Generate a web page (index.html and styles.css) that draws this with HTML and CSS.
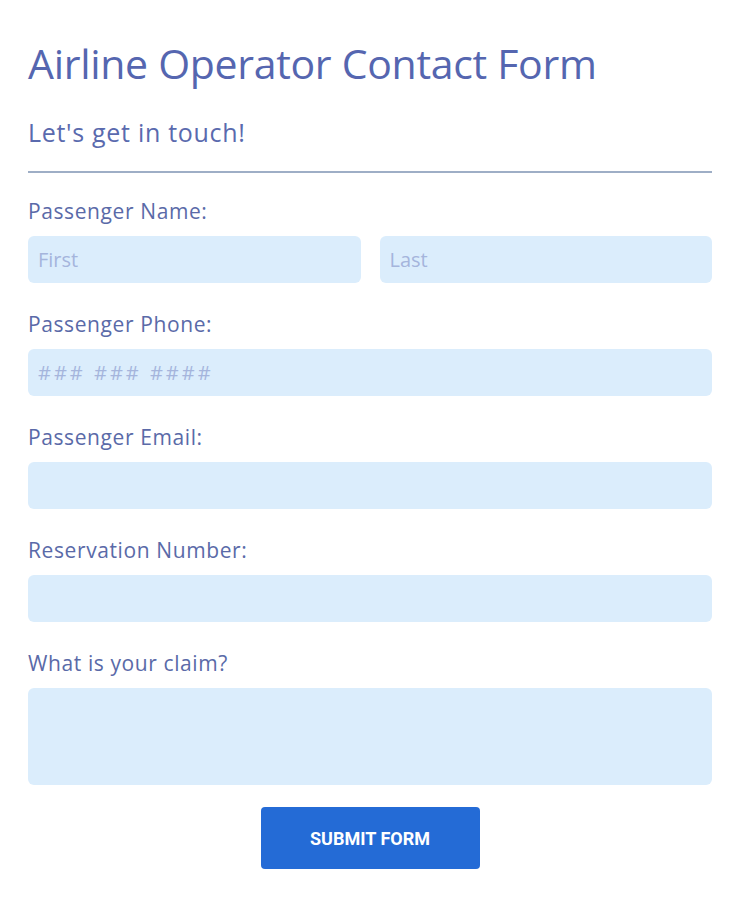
FILE: index.html
```html
<!DOCTYPE html>
<html lang="en">

<head>
  <meta charset="UTF-8">
  <meta name="viewport" content="width=device-width, initial-scale=1.0">
  <title>Airline Operator Contact Form</title>
  <link rel="stylesheet" href="styles.css">
</head>

<body>
  <form class="contact-form">
    <!-- 标题 -->
    <h1 class="form-title">Airline Operator Contact Form</h1>
    <h2 class="form-subtitle">Let's get in touch!</h2>
    <hr class="divider">

    <!-- 乘客姓名 -->
    <div class="field">
      <label class="field-label">Passenger Name:</label>
      <div class="name-row">
        <input type="text" class="field-input" placeholder="First">
        <input type="text" class="field-input" placeholder="Last">
      </div>
    </div>

    <!-- 电话 -->
    <div class="field">
      <label class="field-label">Passenger Phone:</label>
      <input type="tel" class="field-input field-phone" placeholder="### ### ####">
    </div>

    <!-- 邮箱 -->
    <div class="field">
      <label class="field-label">Passenger Email:</label>
      <input type="email" class="field-input">
    </div>

    <!-- 预订号 -->
    <div class="field">
      <label class="field-label">Reservation Number:</label>
      <input type="text" class="field-input">
    </div>

    <!-- 投诉内容 -->
    <div class="field">
      <label class="field-label">What is your claim?</label>
      <textarea class="field-input field-textarea"></textarea>
    </div>

    <div class="actions">
      <button type="submit" class="submit-btn">SUBMIT FORM</button>
    </div>
  </form>
</body>

</html>
```

FILE: styles.css
```css
/* 整体布局 */
body {
  margin: 0;
  background-color: #ffffff;
  font-family: "Open Sans", "Liberation Sans", sans-serif;
  color: #5a6aae;
}

.contact-form {
  display: flex;
  flex-direction: column;
  padding: 38px 28px 0;
}

/* 标题 */
.form-title {
  margin: 0;
  font-size: 41px;
  font-weight: 400;
  letter-spacing: -0.3px;
  line-height: 50px;
  color: #5566b0;
}

.form-subtitle {
  margin: 28px 0 0;
  font-size: 25px;
  font-weight: 400;
  letter-spacing: 0.7px;
  line-height: 32px;
  color: #5a6aae;
}

.divider {
  margin: 23px 0 0;
  border: none;
  height: 2px;
  background-color: #9eaec6;
}

/* 字段 */
.field {
  display: flex;
  flex-direction: column;
  margin-top: 26px;
}

.field+.field {
  margin-top: 29px;
}

.field-label {
  font-size: 21px;
  letter-spacing: 0.6px;
  line-height: 24px;
  color: #5a6aa8;
  margin-bottom: 13px;
}

.name-row {
  display: grid;
  grid-template-columns: 1fr 1fr;
  gap: 19px;
}

.field-input {
  box-sizing: border-box;
  height: 47px;
  width: 100%;
  padding: 0 10px;
  border: none;
  border-radius: 6px;
  background-color: #dbedfc;
  font-family: inherit;
  font-size: 20px;
  color: #5a6aae;
  outline: none;
}

.field-input::placeholder {
  color: #a5b5dc;
}

.field-phone {
  letter-spacing: 3px;
}

.field-textarea {
  height: 97px;
  resize: none;
}

/* 提交按钮 */
.actions {
  display: flex;
  justify-content: center;
  margin-top: 22px;
}

.submit-btn {
  width: 219px;
  height: 62px;
  border: none;
  border-radius: 4px;
  background-color: #246bd6;
  color: #ffffff;
  font-family: Roboto, "Liberation Sans", sans-serif;
  font-size: 18px;
  font-weight: 700;
  cursor: pointer;
}
```
